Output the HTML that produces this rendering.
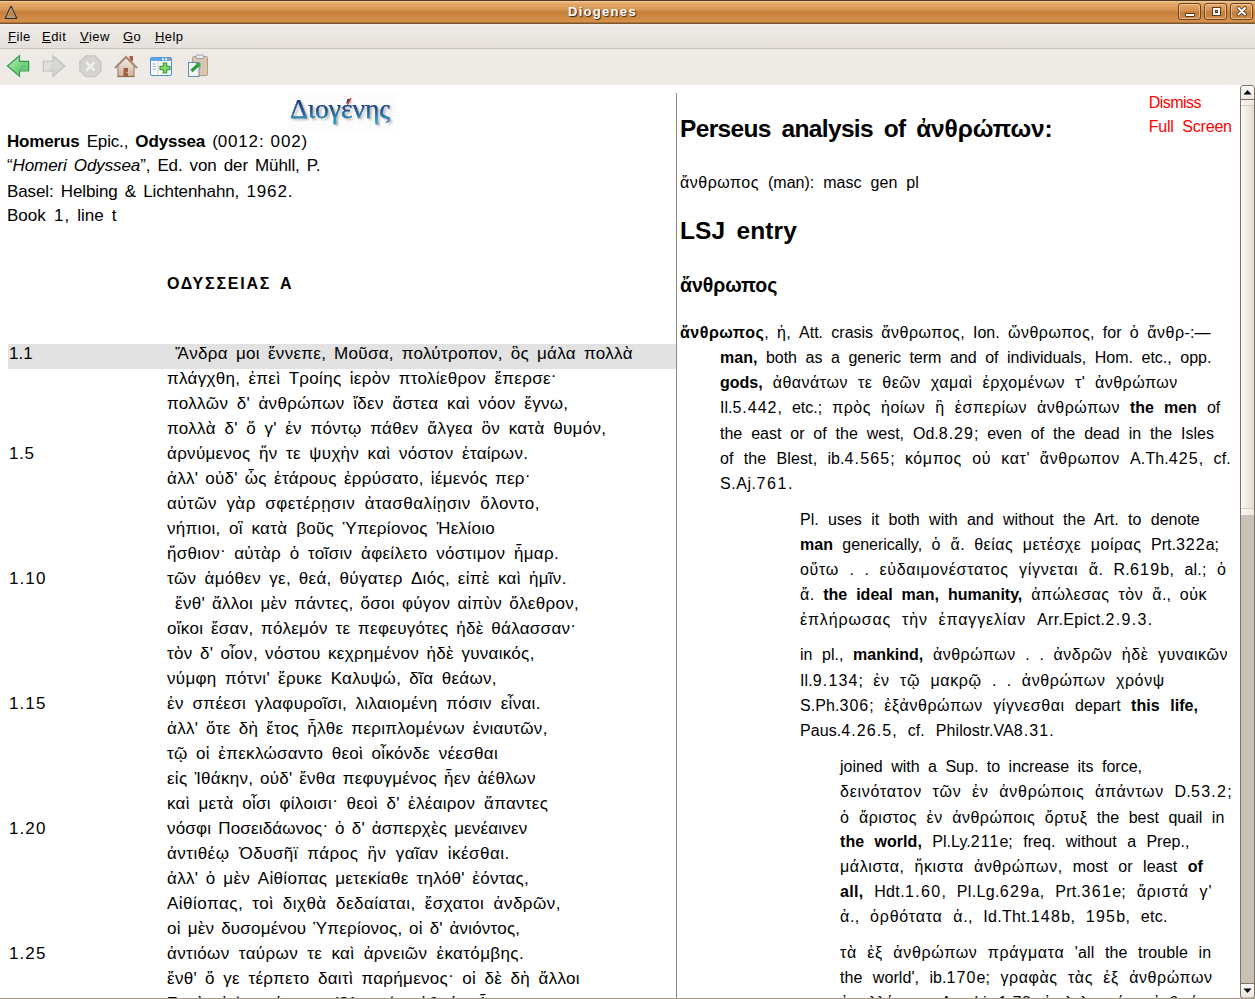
<!DOCTYPE html>
<html><head><meta charset="utf-8">
<style>
html,body{margin:0;padding:0;}
body{width:1255px;height:999px;overflow:hidden;position:relative;background:#fff;font-family:"Liberation Sans",sans-serif;color:#000;}
.abs{position:absolute;}
#title{position:absolute;left:0;top:0;width:1255px;height:24px;
 background:linear-gradient(to bottom,#4e3a24 0px,#4e3a24 1px,#f5c996 1px,#f0bf88 2px,#e4a96b 3px,#d99a58 9px,#c8823c 12px,#c5803a 13px,#cc8842 16px,#d69149 22px,#7a5530 23px,#7a5530 24px);}
#title .t{position:absolute;left:568px;top:4px;font-size:13px;font-weight:bold;color:#fff;letter-spacing:1.3px;text-shadow:1px 1px 1px #3b2612;line-height:16px;}
.wb{position:absolute;top:3px;width:21px;height:15px;border:1px solid #6a4424;border-radius:3px;
 box-shadow:inset 0 0 0 1px rgba(255,220,180,0.55);
 background:linear-gradient(to bottom,#e6a96c 0%,#d49050 45%,#c27d3b 55%,#d08c47 100%);}
#menu{position:absolute;left:0;top:24px;width:1255px;height:24px;background:linear-gradient(to bottom,#f3f1ee 0px,#eeebe7 2px,#e5e0db 24px);border-bottom:1px solid #cdc5bd;}
#menu span{position:absolute;top:5px;font-size:13px;line-height:15px;color:#000;letter-spacing:0.45px;}
#menu u{text-decoration:underline;text-decoration-thickness:1px;text-underline-offset:1px;}
#tool{position:absolute;left:0;top:49px;width:1255px;height:36px;background:#eeeae6;}
#content{position:absolute;left:0;top:85px;width:1255px;height:913px;background:#fff;}
#bottom{position:absolute;left:0;top:998px;width:1255px;height:1px;background:#a89a8a;}
#divider{position:absolute;left:676px;top:93px;width:1px;height:905px;background:#8a8a8a;}
#hl{position:absolute;left:8px;top:344px;width:668px;height:25px;background:#e2e2e2;}
.ln{position:absolute;white-space:nowrap;color:#000;}
.ln b{font-weight:bold;}
.at{position:relative;top:-3.5px;}
.l .g{letter-spacing:calc(var(--ls) + 0.3px)} .r .g{letter-spacing:calc(var(--ls) + 0.5px)} .d{letter-spacing:calc(var(--ls) + 1px)}
#sb{position:absolute;left:1240px;top:85px;width:15px;height:913px;}
#logo,#logosh{position:absolute;left:290px;top:93px;font-family:"Liberation Serif",serif;font-size:27.5px;line-height:32px;letter-spacing:0px;}
#logosh{left:292px;top:95px;color:rgba(80,80,80,0.45);filter:blur(1.2px);}
#logo{background:linear-gradient(to bottom,#15306a 0px,#1a3f7c 10px,#1f5a94 18px,#2590c0 25px,#2ab8dc 32px);-webkit-background-clip:text;background-clip:text;color:transparent;-webkit-text-stroke:0.25px #1d4a84;}
</style></head><body>
<div id="title">
 <svg class="abs" style="left:4px;top:5px" width="14" height="15" viewBox="0 0 14 15">
  <path d="M7 1.5 L12.5 13.3 L1.5 13.3 Z" fill="none" stroke="#2f2f2f" stroke-width="1.6" stroke-linejoin="round"/>
  <path d="M7 3.2 L11.3 12.4 L2.7 12.4 Z" fill="none" stroke="#d8d8d8" stroke-width="0.6"/>
 </svg>
 <div class="t">Diogenes</div>
 <div class="wb" style="left:1178px"><div class="abs" style="left:6px;top:9px;width:8px;height:2px;background:#fff;border:1px solid #5a3a1e;border-radius:1px"></div></div>
 <div class="wb" style="left:1204px"><div class="abs" style="left:8px;top:4px;width:3px;height:3px;border:2px solid #fff;outline:1px solid #5a3a1e;box-shadow:inset 0 0 0 1px #5a3a1e;"></div></div>
 <div class="wb" style="left:1230px">
  <svg class="abs" style="left:4px;top:1px" width="13" height="13" viewBox="0 0 13 13">
   <path d="M3.5 3 L10 9.5 M10 3 L3.5 9.5" stroke="#5a3a1e" stroke-width="3.8" stroke-linecap="round"/>
   <path d="M3.5 3 L10 9.5 M10 3 L3.5 9.5" stroke="#fff" stroke-width="2" stroke-linecap="round"/>
  </svg>
 </div>
</div>
<div id="menu">
 <span style="left:8px"><u>F</u>ile</span>
 <span style="left:42px"><u>E</u>dit</span>
 <span style="left:80px"><u>V</u>iew</span>
 <span style="left:123px"><u>G</u>o</span>
 <span style="left:155px"><u>H</u>elp</span>
</div>
<div id="tool">
 <!-- back -->
 <svg class="abs" style="left:6px;top:5px" width="25" height="25" viewBox="0 0 25 25">
  <defs><linearGradient id="gb" x1="0" y1="0" x2="1" y2="1"><stop offset="0" stop-color="#c8efc4"/><stop offset="0.6" stop-color="#6fd07a"/><stop offset="1" stop-color="#d9f07a"/></linearGradient></defs>
  <path d="M1.5 12 L13.5 1.8 L13.5 7.3 L22.6 7.3 L22.6 17 L13.5 17 L13.5 22.3 Z" fill="url(#gb)" stroke="#2f9a4e" stroke-width="1.2" stroke-linejoin="miter"/><path d="M13 17 Q13 12 18 11 L22 11 L22 16.5 Z" fill="#58c070" opacity="0.6"/>
 </svg>
 <!-- forward -->
 <svg class="abs" style="left:42px;top:5px" width="25" height="25" viewBox="0 0 25 25">
  <path d="M22.8 12 L11 1.8 L11 7.3 L1.4 7.3 L1.4 17 L11 17 L11 22.3 Z" fill="#d6d6d4" stroke="#bdbdbb" stroke-width="1.1"/>
  <path d="M11 7.8 L15 7.8 Q8 9.5 6.5 16.5 L1.9 16.5 L1.9 7.8 Z" fill="#e0e0de"/>
 </svg>
 <!-- stop -->
 <svg class="abs" style="left:78px;top:5px" width="25" height="25" viewBox="0 0 25 25">
  <path d="M8 1.8 L17 1.8 L23 7.8 L23 16.8 L17 22.8 L8 22.8 L1.8 16.8 L1.8 7.8 Z" fill="#d4d3d1" stroke="#c2c1bf" stroke-width="1.1"/>
  <path d="M8.2 8.2 L16.6 16.6 M16.6 8.2 L8.2 16.6" stroke="#f2f1ef" stroke-width="2.4"/>
 </svg>
 <!-- home -->
 <svg class="abs" style="left:113px;top:4px" width="26" height="26" viewBox="0 0 26 26">
  <defs><linearGradient id="gh" x1="0" y1="0" x2="0" y2="1"><stop offset="0" stop-color="#f4ece4"/><stop offset="1" stop-color="#cdb4a2"/></linearGradient></defs>
  <rect x="16.5" y="3" width="3.5" height="5" fill="#b8584a"/>
  <path d="M5 12 L5 23.5 L21 23.5 L21 12 L13 4.5 Z" fill="url(#gh)" stroke="#9a7456" stroke-width="1"/>
  <path d="M2 15 L13 4 L24 15" fill="none" stroke="#a88a76" stroke-width="2.2"/>
  <rect x="10.5" y="15" width="4.5" height="8.5" fill="#a45a48"/>
  <path d="M4.5 23.5 L21.5 23.5" stroke="#8a6a48" stroke-width="1.2"/>
  <circle cx="14" cy="19.5" r="0.7" fill="#f0f040"/>
 </svg>
 <!-- new window -->
 <svg class="abs" style="left:149px;top:5px" width="26" height="25" viewBox="0 0 26 25">
  <rect x="1.5" y="3.5" width="21" height="18" rx="1.5" fill="#fbfbfa" stroke="#4a8ed0" stroke-width="1"/>
  <rect x="1.5" y="3.5" width="21" height="3.5" rx="1" fill="#5aa6e6"/>
  <rect x="13" y="4.3" width="2" height="2" fill="#dbe8f4"/><rect x="16" y="4.3" width="2" height="2" fill="#dbe8f4"/><rect x="19" y="4.3" width="2" height="2" fill="#f08a5a"/>
  <path d="M9 8 L9 20" stroke="#b8bcc0" stroke-width="0.8"/>
  <path d="M3.5 10 L7 10 M3.5 12.5 L7 12.5 M3.5 15 L7 15" stroke="#9aa0a6" stroke-width="0.8"/>
  <path d="M14.3 9 L17.7 9 L17.7 12.3 L21 12.3 L21 15.7 L17.7 15.7 L17.7 19 L14.3 19 L14.3 15.7 L11 15.7 L11 12.3 L14.3 12.3 Z" fill="#8ad86a" stroke="#2a9a3a" stroke-width="1.1"/>
 </svg>
 <!-- clipboard -->
 <svg class="abs" style="left:186px;top:5px" width="25" height="25" viewBox="0 0 25 25">
  <rect x="6.5" y="2.5" width="15" height="19" rx="1.2" fill="#d8c4b0" stroke="#b09c88" stroke-width="1"/>
  <rect x="10" y="1" width="7.5" height="3.5" rx="1" fill="#e8e8f0" stroke="#8890a0" stroke-width="0.8"/>
  <rect x="2.5" y="8.5" width="10.5" height="14" fill="#f4f4f2" stroke="#6a8aaa" stroke-width="1"/>
  <path d="M5.5 17 L12.5 10.5" stroke="#2a9a3a" stroke-width="3.2"/>
  <path d="M9.5 9 L14.5 9 L14.5 14 Z" fill="#3aaa4a"/>
 </svg>
</div>
<div id="content">
</div>
<div id="hl"></div>
<div class="abs" style="left:288px;top:93px;width:109px;height:37px;background:#fcfcfc"></div><div id="logosh">Διογένης</div><div id="logo">Διογένης</div><svg class="abs" style="left:344px;top:97px" width="10" height="10" viewBox="0 0 10 10"><path d="M6.6 1.6 L3.6 7" stroke="#d83a2a" stroke-width="1.6" stroke-linecap="round"/></svg>
<div id="l1" class="ln l" style="left:7.00px;top:132.61px;font-size:17px;line-height:17px;--ls:-0.160px;letter-spacing:-0.160px;word-spacing:2.543px;"><b>Homerus</b> Epic., <b>Odyssea</b> (<span class="d">0012</span>: <span class="d">002</span>)</div>
<div id="l2" class="ln l" style="left:7.00px;top:157.41px;font-size:17px;line-height:17px;--ls:-0.095px;letter-spacing:-0.095px;word-spacing:2.350px;">“<i>Homeri Odyssea</i>”, Ed. von der Mühll, P.</div>
<div id="l3" class="ln l" style="left:7.00px;top:182.81px;font-size:17px;line-height:17px;--ls:-0.107px;letter-spacing:-0.107px;word-spacing:2.524px;">Basel: Helbing &amp; Lichtenhahn, <span class="d">1962.</span></div>
<div id="l4" class="ln l" style="left:7.00px;top:207.11px;font-size:17px;line-height:17px;--ls:0.000px;letter-spacing:0.000px;word-spacing:3.429px;">Book <span class="d">1</span>, line t</div>
<div id="hd" class="ln l" style="left:167.00px;top:276.46px;font-size:16px;line-height:16px;--ls:1.469px;letter-spacing:1.469px;word-spacing:3.000px;"><b><span class="g">ΟΔΥΣΣΕΙΑΣ</span> <span class="g">Α</span></b></div>
<div id="p1" class="ln l" style="left:175.00px;top:345.21px;font-size:17px;line-height:17px;--ls:0.000px;letter-spacing:0.000px;word-spacing:3.398px;"><span class="g">Ἄνδρα</span> <span class="g">μοι</span> <span class="g">ἔννεπε</span>, <span class="g">Μοῦσα</span>, <span class="g">πολύτροπον</span>, <span class="g">ὃς</span> <span class="g">μάλα</span> <span class="g">πολλὰ</span></div>
<div id="p2" class="ln l" style="left:167.00px;top:370.21px;font-size:17px;line-height:17px;--ls:0.000px;letter-spacing:0.000px;word-spacing:3.681px;"><span class="g">πλάγχθη</span>, <span class="g">ἐπεὶ</span> <span class="g">Τροίης</span> <span class="g">ἱερὸν</span> <span class="g">πτολίεθρον</span> <span class="g">ἔπερσε</span><span class="at">·</span></div>
<div id="p3" class="ln l" style="left:167.00px;top:395.21px;font-size:17px;line-height:17px;--ls:0.000px;letter-spacing:0.000px;word-spacing:3.906px;"><span class="g">πολλῶν</span> <span class="g">δ</span>' <span class="g">ἀνθρώπων</span> <span class="g">ἴδεν</span> <span class="g">ἄστεα</span> <span class="g">καὶ</span> <span class="g">νόον</span> <span class="g">ἔγνω</span>,</div>
<div id="p4" class="ln l" style="left:167.00px;top:420.21px;font-size:17px;line-height:17px;--ls:0.000px;letter-spacing:0.000px;word-spacing:3.875px;"><span class="g">πολλὰ</span> <span class="g">δ</span>' <span class="g">ὅ</span> <span class="g">γ</span>' <span class="g">ἐν</span> <span class="g">πόντῳ</span> <span class="g">πάθεν</span> <span class="g">ἄλγεα</span> <span class="g">ὃν</span> <span class="g">κατὰ</span> <span class="g">θυμόν</span>,</div>
<div id="p5" class="ln l" style="left:167.00px;top:445.21px;font-size:17px;line-height:17px;--ls:0.000px;letter-spacing:0.000px;word-spacing:3.723px;"><span class="g">ἀρνύμενος</span> <span class="g">ἥν</span> <span class="g">τε</span> <span class="g">ψυχὴν</span> <span class="g">καὶ</span> <span class="g">νόστον</span> <span class="g">ἑταίρων</span>.</div>
<div id="p6" class="ln l" style="left:167.00px;top:470.21px;font-size:17px;line-height:17px;--ls:0.000px;letter-spacing:0.000px;word-spacing:2.489px;"><span class="g">ἀλλ</span>' <span class="g">οὐδ</span>' <span class="g">ὧς</span> <span class="g">ἑτάρους</span> <span class="g">ἐρρύσατο</span>, <span class="g">ἱέμενός</span> <span class="g">περ</span><span class="at">·</span></div>
<div id="p7" class="ln l" style="left:167.00px;top:495.21px;font-size:17px;line-height:17px;--ls:0.180px;letter-spacing:0.180px;word-spacing:4.463px;"><span class="g">αὐτῶν</span> <span class="g">γὰρ</span> <span class="g">σφετέρῃσιν</span> <span class="g">ἀτασθαλίῃσιν</span> <span class="g">ὄλοντο</span>,</div>
<div id="p8" class="ln l" style="left:167.00px;top:520.21px;font-size:17px;line-height:17px;--ls:0.000px;letter-spacing:0.000px;word-spacing:4.000px;"><span class="g">νήπιοι</span>, <span class="g">οἳ</span> <span class="g">κατὰ</span> <span class="g">βοῦς</span> <span class="g">Ὑπερίονος</span> <span class="g">Ἠελίοιο</span></div>
<div id="p9" class="ln l" style="left:167.00px;top:545.21px;font-size:17px;line-height:17px;--ls:0.000px;letter-spacing:0.000px;word-spacing:3.889px;"><span class="g">ἤσθιον</span><span class="at">·</span> <span class="g">αὐτὰρ</span> <span class="g">ὁ</span> <span class="g">τοῖσιν</span> <span class="g">ἀφείλετο</span> <span class="g">νόστιμον</span> <span class="g">ἦμαρ</span>.</div>
<div id="p10" class="ln l" style="left:167.00px;top:570.21px;font-size:17px;line-height:17px;--ls:0.000px;letter-spacing:0.000px;word-spacing:3.478px;"><span class="g">τῶν</span> <span class="g">ἁμόθεν</span> <span class="g">γε</span>, <span class="g">θεά</span>, <span class="g">θύγατερ</span> <span class="g">Διός</span>, <span class="g">εἰπὲ</span> <span class="g">καὶ</span> <span class="g">ἡμῖν</span>.</div>
<div id="p11" class="ln l" style="left:175.00px;top:595.21px;font-size:17px;line-height:17px;--ls:0.000px;letter-spacing:0.000px;word-spacing:2.460px;"><span class="g">ἔνθ</span>' <span class="g">ἄλλοι</span> <span class="g">μὲν</span> <span class="g">πάντες</span>, <span class="g">ὅσοι</span> <span class="g">φύγον</span> <span class="g">αἰπὺν</span> <span class="g">ὄλεθρον</span>,</div>
<div id="p12" class="ln l" style="left:167.00px;top:620.21px;font-size:17px;line-height:17px;--ls:0.000px;letter-spacing:0.000px;word-spacing:2.957px;"><span class="g">οἴκοι</span> <span class="g">ἔσαν</span>, <span class="g">πόλεμόν</span> <span class="g">τε</span> <span class="g">πεφευγότες</span> <span class="g">ἠδὲ</span> <span class="g">θάλασσαν</span><span class="at">·</span></div>
<div id="p13" class="ln l" style="left:167.00px;top:645.21px;font-size:17px;line-height:17px;--ls:0.000px;letter-spacing:0.000px;word-spacing:2.740px;"><span class="g">τὸν</span> <span class="g">δ</span>' <span class="g">οἶον</span>, <span class="g">νόστου</span> <span class="g">κεχρημένον</span> <span class="g">ἠδὲ</span> <span class="g">γυναικός</span>,</div>
<div id="p14" class="ln l" style="left:167.00px;top:670.21px;font-size:17px;line-height:17px;--ls:0.000px;letter-spacing:0.000px;word-spacing:3.687px;"><span class="g">νύμφη</span> <span class="g">πότνι</span>' <span class="g">ἔρυκε</span> <span class="g">Καλυψώ</span>, <span class="g">δῖα</span> <span class="g">θεάων</span>,</div>
<div id="p15" class="ln l" style="left:167.00px;top:695.21px;font-size:17px;line-height:17px;--ls:0.000px;letter-spacing:0.000px;word-spacing:4.141px;"><span class="g">ἐν</span> <span class="g">σπέεσι</span> <span class="g">γλαφυροῖσι</span>, <span class="g">λιλαιομένη</span> <span class="g">πόσιν</span> <span class="g">εἶναι</span>.</div>
<div id="p16" class="ln l" style="left:167.00px;top:720.21px;font-size:17px;line-height:17px;--ls:0.000px;letter-spacing:0.000px;word-spacing:3.278px;"><span class="g">ἀλλ</span>' <span class="g">ὅτε</span> <span class="g">δὴ</span> <span class="g">ἔτος</span> <span class="g">ἦλθε</span> <span class="g">περιπλομένων</span> <span class="g">ἐνιαυτῶν</span>,</div>
<div id="p17" class="ln l" style="left:167.00px;top:745.21px;font-size:17px;line-height:17px;--ls:0.000px;letter-spacing:0.000px;word-spacing:3.703px;"><span class="g">τῷ</span> <span class="g">οἱ</span> <span class="g">ἐπεκλώσαντο</span> <span class="g">θεοὶ</span> <span class="g">οἶκόνδε</span> <span class="g">νέεσθαι</span></div>
<div id="p18" class="ln l" style="left:167.00px;top:770.21px;font-size:17px;line-height:17px;--ls:-0.028px;letter-spacing:-0.028px;word-spacing:2.335px;"><span class="g">εἰς</span> <span class="g">Ἰθάκην</span>, <span class="g">οὐδ</span>' <span class="g">ἔνθα</span> <span class="g">πεφυγμένος</span> <span class="g">ἦεν</span> <span class="g">ἀέθλων</span></div>
<div id="p19" class="ln l" style="left:167.00px;top:795.21px;font-size:17px;line-height:17px;--ls:0.000px;letter-spacing:0.000px;word-spacing:3.874px;"><span class="g">καὶ</span> <span class="g">μετὰ</span> <span class="g">οἷσι</span> <span class="g">φίλοισι</span><span class="at">·</span> <span class="g">θεοὶ</span> <span class="g">δ</span>' <span class="g">ἐλέαιρον</span> <span class="g">ἅπαντες</span></div>
<div id="p20" class="ln l" style="left:167.00px;top:820.21px;font-size:17px;line-height:17px;--ls:-0.124px;letter-spacing:-0.124px;word-spacing:2.477px;"><span class="g">νόσφι</span> <span class="g">Ποσειδάωνος</span><span class="at">·</span> <span class="g">ὁ</span> <span class="g">δ</span>' <span class="g">ἀσπερχὲς</span> <span class="g">μενέαινεν</span></div>
<div id="p21" class="ln l" style="left:167.00px;top:845.21px;font-size:17px;line-height:17px;--ls:0.169px;letter-spacing:0.169px;word-spacing:4.367px;"><span class="g">ἀντιθέῳ</span> <span class="g">Ὀδυσῆϊ</span> <span class="g">πάρος</span> <span class="g">ἣν</span> <span class="g">γαῖαν</span> <span class="g">ἱκέσθαι</span>.</div>
<div id="p22" class="ln l" style="left:167.00px;top:870.21px;font-size:17px;line-height:17px;--ls:0.000px;letter-spacing:0.000px;word-spacing:3.044px;"><span class="g">ἀλλ</span>' <span class="g">ὁ</span> <span class="g">μὲν</span> <span class="g">Αἰθίοπας</span> <span class="g">μετεκίαθε</span> <span class="g">τηλόθ</span>' <span class="g">ἐόντας</span>,</div>
<div id="p23" class="ln l" style="left:167.00px;top:895.21px;font-size:17px;line-height:17px;--ls:0.197px;letter-spacing:0.197px;word-spacing:4.367px;"><span class="g">Αἰθίοπας</span>, <span class="g">τοὶ</span> <span class="g">διχθὰ</span> <span class="g">δεδαίαται</span>, <span class="g">ἔσχατοι</span> <span class="g">ἀνδρῶν</span>,</div>
<div id="p24" class="ln l" style="left:167.00px;top:920.21px;font-size:17px;line-height:17px;--ls:-0.092px;letter-spacing:-0.092px;word-spacing:2.349px;"><span class="g">οἱ</span> <span class="g">μὲν</span> <span class="g">δυσομένου</span> <span class="g">Ὑπερίονος</span>, <span class="g">οἱ</span> <span class="g">δ</span>' <span class="g">ἀνιόντος</span>,</div>
<div id="p25" class="ln l" style="left:167.00px;top:945.21px;font-size:17px;line-height:17px;--ls:0.065px;letter-spacing:0.065px;word-spacing:4.390px;"><span class="g">ἀντιόων</span> <span class="g">ταύρων</span> <span class="g">τε</span> <span class="g">καὶ</span> <span class="g">ἀρνειῶν</span> <span class="g">ἑκατόμβης</span>.</div>
<div id="p26" class="ln l" style="left:167.00px;top:970.21px;font-size:17px;line-height:17px;--ls:0.000px;letter-spacing:0.000px;word-spacing:3.700px;"><span class="g">ἔνθ</span>' <span class="g">ὅ</span> <span class="g">γε</span> <span class="g">τέρπετο</span> <span class="g">δαιτὶ</span> <span class="g">παρήμενος</span><span class="at">·</span> <span class="g">οἱ</span> <span class="g">δὲ</span> <span class="g">δὴ</span> <span class="g">ἄλλοι</span></div>
<div id="p27" class="ln l" style="left:167.00px;top:995.21px;font-size:17px;line-height:17px;--ls:-0.241px;letter-spacing:-0.241px;word-spacing:2.459px;"><span class="g">Ζηνὸς</span> <span class="g">ἐνὶ</span> <span class="g">μεγάροισιν</span> <span class="g">Ὀλυμπίου</span> <span class="g">ἁθρόοι</span> <span class="g">ἦσαν</span>.</div>
<div id="n1" class="ln l" style="left:9.00px;top:345.21px;font-size:17px;line-height:17px;--ls:-0.922px;letter-spacing:-0.922px;word-spacing:3.000px;"><span class="d">1.1</span></div>
<div id="n5" class="ln l" style="left:9.00px;top:445.21px;font-size:17px;line-height:17px;--ls:-0.386px;letter-spacing:-0.386px;word-spacing:3.000px;"><span class="d">1.5</span></div>
<div id="n10" class="ln l" style="left:9.00px;top:570.21px;font-size:17px;line-height:17px;--ls:0.095px;letter-spacing:0.095px;word-spacing:3.000px;"><span class="d">1.10</span></div>
<div id="n15" class="ln l" style="left:9.00px;top:695.21px;font-size:17px;line-height:17px;--ls:0.095px;letter-spacing:0.095px;word-spacing:3.000px;"><span class="d">1.15</span></div>
<div id="n20" class="ln l" style="left:9.00px;top:820.21px;font-size:17px;line-height:17px;--ls:0.095px;letter-spacing:0.095px;word-spacing:3.000px;"><span class="d">1.20</span></div>
<div id="n25" class="ln l" style="left:9.00px;top:945.21px;font-size:17px;line-height:17px;--ls:0.095px;letter-spacing:0.095px;word-spacing:3.000px;"><span class="d">1.25</span></div>
<div id="divider"></div>
<div id="dm" class="ln r" style="left:1148.70px;top:95.16px;font-size:16px;line-height:16px;--ls:-0.527px;letter-spacing:-0.527px;word-spacing:4.500px;color:#f00">Dismiss</div>
<div id="fs" class="ln r" style="left:1148.70px;top:118.86px;font-size:16px;line-height:16px;--ls:-0.211px;letter-spacing:-0.211px;word-spacing:4.500px;color:#f00">Full Screen</div>
<div id="h1" class="ln r" style="left:680.00px;top:117.26px;font-size:24.5px;line-height:24.5px;--ls:-0.647px;letter-spacing:-0.647px;word-spacing:4.500px;"><b>Perseus analysis of <span class="g">ἀνθρώπων</span>:</b></div>
<div id="an" class="ln r" style="left:680.00px;top:174.76px;font-size:16px;line-height:16px;--ls:0.000px;letter-spacing:0.000px;word-spacing:4.620px;"><span class="g">ἄνθρωπος</span> (man): masc gen pl</div>
<div id="h2" class="ln r" style="left:680.00px;top:218.86px;font-size:24.5px;line-height:24.5px;--ls:0.082px;letter-spacing:0.082px;word-spacing:4.500px;"><b>LSJ entry</b></div>
<div id="h3" class="ln r" style="left:680.00px;top:276.49px;font-size:19.5px;line-height:19.5px;--ls:-0.564px;letter-spacing:-0.564px;word-spacing:4.500px;"><b><span class="g">ἄνθρωπος</span></b></div>
<div id="r0_0" class="ln r" style="left:680.00px;top:325.06px;font-size:16px;line-height:16px;--ls:0.000px;letter-spacing:0.000px;word-spacing:3.800px;"><b><span class="g">ἄνθρωπος</span></b>, <span class="g">ἡ</span>, Att. crasis <span class="g">ἅνθρωπος</span>, Ion. <span class="g">ὥνθρωπος</span>, for <span class="g">ὁ</span> <span class="g">ἄνθρ</span>-:—</div>
<div id="r0_1" class="ln r" style="left:720.00px;top:350.26px;font-size:16px;line-height:16px;--ls:0.000px;letter-spacing:0.000px;word-spacing:4.086px;"><b>man,</b> both as a generic term and of individuals, Hom. etc., opp.</div>
<div id="r0_2" class="ln r" style="left:720.00px;top:375.26px;font-size:16px;line-height:16px;--ls:0.000px;letter-spacing:0.000px;word-spacing:5.537px;"><b>gods,</b> <span class="g">ἀθανάτων</span> <span class="g">τε</span> <span class="g">θεῶν</span> <span class="g">χαμαὶ</span> <span class="g">ἐρχομένων</span> <span class="g">τ</span>' <span class="g">ἀνθρώπων</span></div>
<div id="r0_3" class="ln r" style="left:720.00px;top:400.46px;font-size:16px;line-height:16px;--ls:0.000px;letter-spacing:0.000px;word-spacing:5.570px;">Il.<span class="d">5.442</span>, etc.; <span class="g">πρὸς</span> <span class="g">ἠοίων</span> <span class="g">ἢ</span> <span class="g">ἑσπερίων</span> <span class="g">ἀνθρώπων</span> <b>the men</b> of</div>
<div id="r0_4" class="ln r" style="left:720.00px;top:426.46px;font-size:16px;line-height:16px;--ls:0.000px;letter-spacing:0.000px;word-spacing:4.439px;">the east or of the west, Od.<span class="d">8.29</span>; even of the dead in the Isles</div>
<div id="r0_5" class="ln r" style="left:720.00px;top:451.46px;font-size:16px;line-height:16px;--ls:0.097px;letter-spacing:0.097px;word-spacing:5.708px;">of the Blest, ib.<span class="d">4.565</span>; <span class="g">κόμπος</span> <span class="g">οὐ</span> <span class="g">κατ</span>' <span class="g">ἄνθρωπον</span> A.Th.<span class="d">425</span>, cf.</div>
<div id="r0_6" class="ln r" style="left:720.00px;top:476.46px;font-size:16px;line-height:16px;--ls:0.561px;letter-spacing:0.561px;word-spacing:4.500px;">S.Aj.<span class="d">761.</span></div>
<div id="r1_0" class="ln r" style="left:800.00px;top:512.46px;font-size:16px;line-height:16px;--ls:0.000px;letter-spacing:0.000px;word-spacing:4.931px;">Pl. uses it both with and without the Art. to denote</div>
<div id="r1_1" class="ln r" style="left:800.00px;top:537.46px;font-size:16px;line-height:16px;--ls:0.000px;letter-spacing:0.000px;word-spacing:5.022px;"><b>man</b> generically, <span class="g">ὁ</span> <span class="g">ἄ</span>. <span class="g">θείας</span> <span class="g">μετέσχε</span> <span class="g">μοίρας</span> Prt.<span class="d">322</span>a;</div>
<div id="r1_2" class="ln r" style="left:800.00px;top:562.46px;font-size:16px;line-height:16px;--ls:0.199px;letter-spacing:0.199px;word-spacing:5.719px;"><span class="g">οὕτω</span> . . <span class="g">εὐδαιμονέστατος</span> <span class="g">γίγνεται</span> <span class="g">ἄ</span>. R.<span class="d">619</span>b, al.; <span class="g">ὁ</span></div>
<div id="r1_3" class="ln r" style="left:800.00px;top:587.46px;font-size:16px;line-height:16px;--ls:0.000px;letter-spacing:0.000px;word-spacing:4.537px;"><span class="g">ἄ</span>. <b>the ideal man, humanity,</b> <span class="g">ἀπώλεσας</span> <span class="g">τὸν</span> <span class="g">ἄ</span>., <span class="g">οὐκ</span></div>
<div id="r1_4" class="ln r" style="left:800.00px;top:612.46px;font-size:16px;line-height:16px;--ls:0.346px;letter-spacing:0.346px;word-spacing:6.046px;"><span class="g">ἐπλήρωσας</span> <span class="g">τὴν</span> <span class="g">ἐπαγγελίαν</span> Arr.Epict.<span class="d">2.9.3.</span></div>
<div id="r2_0" class="ln r" style="left:800.00px;top:647.46px;font-size:16px;line-height:16px;--ls:0.000px;letter-spacing:0.000px;word-spacing:5.172px;">in pl., <b>mankind,</b> <span class="g">ἀνθρώπων</span> . . <span class="g">ἀνδρῶν</span> <span class="g">ἠδὲ</span> <span class="g">γυναικῶν</span></div>
<div id="r2_1" class="ln r" style="left:800.00px;top:672.96px;font-size:16px;line-height:16px;--ls:0.118px;letter-spacing:0.118px;word-spacing:5.768px;">Il.<span class="d">9.134</span>; <span class="g">ἐν</span> <span class="g">τῷ</span> <span class="g">μακρῷ</span> . . <span class="g">ἀνθρώπων</span> <span class="g">χρόνψ</span></div>
<div id="r2_2" class="ln r" style="left:800.00px;top:698.21px;font-size:16px;line-height:16px;--ls:0.058px;letter-spacing:0.058px;word-spacing:5.881px;">S.Ph.<span class="d">306</span>; <span class="g">ἐξἀνθρώπων</span> <span class="g">γίγνεσθαι</span> depart <b>this life,</b></div>
<div id="r2_3" class="ln r" style="left:800.00px;top:723.46px;font-size:16px;line-height:16px;--ls:0.077px;letter-spacing:0.077px;word-spacing:6.445px;">Paus.<span class="d">4.26.5</span>, cf. Philostr.VA<span class="d">8.31.</span></div>
<div id="r3_0" class="ln r" style="left:840.00px;top:759.46px;font-size:16px;line-height:16px;--ls:0.000px;letter-spacing:0.000px;word-spacing:4.011px;">joined with a Sup. to increase its force,</div>
<div id="r3_1" class="ln r" style="left:840.00px;top:784.36px;font-size:16px;line-height:16px;--ls:0.237px;letter-spacing:0.237px;word-spacing:5.851px;"><span class="g">δεινότατον</span> <span class="g">τῶν</span> <span class="g">ἐν</span> <span class="g">ἀνθρώποις</span> <span class="g">ἁπάντων</span> D.<span class="d">53.2</span>;</div>
<div id="r3_2" class="ln r" style="left:840.00px;top:809.76px;font-size:16px;line-height:16px;--ls:0.000px;letter-spacing:0.000px;word-spacing:5.116px;"><span class="g">ὁ</span> <span class="g">ἄριστος</span> <span class="g">ἐν</span> <span class="g">ἀνθρώποις</span> <span class="g">ὄρτυξ</span> the best quail in</div>
<div id="r3_3" class="ln r" style="left:840.00px;top:834.26px;font-size:16px;line-height:16px;--ls:0.050px;letter-spacing:0.050px;word-spacing:5.824px;"><b>the world,</b> Pl.Ly.<span class="d">211</span>e; freq. without a Prep.,</div>
<div id="r3_4" class="ln r" style="left:840.00px;top:859.46px;font-size:16px;line-height:16px;--ls:0.107px;letter-spacing:0.107px;word-spacing:5.807px;"><span class="g">μάλιστα</span>, <span class="g">ἥκιστα</span> <span class="g">ἀνθρώπων</span>, most or least <b>of</b></div>
<div id="r3_5" class="ln r" style="left:840.00px;top:884.46px;font-size:16px;line-height:16px;--ls:0.340px;letter-spacing:0.340px;word-spacing:5.823px;"><b>all,</b> Hdt.<span class="d">1.60</span>, Pl.Lg.<span class="d">629</span>a, Prt.<span class="d">361</span>e; <span class="g">ἄριστά</span> <span class="g">γ</span>'</div>
<div id="r3_6" class="ln r" style="left:840.00px;top:909.46px;font-size:16px;line-height:16px;--ls:0.286px;letter-spacing:0.286px;word-spacing:5.843px;"><span class="g">ἀ</span>., <span class="g">ὀρθότατα</span> <span class="g">ἀ</span>., Id.Tht.<span class="d">148</span>b, <span class="d">195</span>b, etc.</div>
<div id="r4_0" class="ln r" style="left:840.00px;top:945.46px;font-size:16px;line-height:16px;--ls:0.168px;letter-spacing:0.168px;word-spacing:5.760px;"><span class="g">τὰ</span> <span class="g">ἐξ</span> <span class="g">ἀνθρώπων</span> <span class="g">πράγματα</span> 'all the trouble in</div>
<div id="r4_1" class="ln r" style="left:840.00px;top:970.46px;font-size:16px;line-height:16px;--ls:0.081px;letter-spacing:0.081px;word-spacing:5.811px;">the world', ib.<span class="d">170</span>e; <span class="g">γραφὰς</span> <span class="g">τὰς</span> <span class="g">ἐξ</span> <span class="g">ἀνθρώπων</span></div>
<div id="r4_2" class="ln r" style="left:840.00px;top:995.46px;font-size:16px;line-height:16px;--ls:-0.507px;letter-spacing:-0.507px;word-spacing:4.328px;"><span class="g">ἀπαλλάσσειν</span> Aeschin.<span class="d">1.78</span>; <span class="g">ἐπιλελησμένοι</span> <span class="g">ἀνθρώπων</span></div>
<div id="sb">
 <div class="abs" style="left:0;top:0;width:13px;height:912px;border:1px solid #7f7263;border-radius:3px;background:#c9c0b6;"></div>
 <div class="abs" style="left:1px;top:1px;width:13px;height:13px;border-bottom:1px solid #7f7263;border-radius:2px 2px 0 0;background:linear-gradient(to bottom,#fbfaf8,#ebe7e3);"></div>
 <svg class="abs" style="left:3px;top:4px" width="9" height="6" viewBox="0 0 9 6"><path d="M0.5 5.5 L4.5 1 L8.5 5.5 Z" fill="#000"/></svg>
 <div class="abs" style="left:1px;top:15px;width:13px;height:414px;border-bottom:1px solid #7f7263;background:linear-gradient(to right,#fbfaf8,#e2dbd5);"></div>
 <div class="abs" style="left:1px;top:15px;width:13px;height:5px;border-bottom:1px solid #d4cdc6;background:linear-gradient(to right,#faf8f6,#ece7e2);"></div>
 <div class="abs" style="left:1px;top:423px;width:13px;height:6px;border-top:1px solid #d4cdc6;background:linear-gradient(to right,#faf8f6,#ece7e2);"></div>
 <div class="abs" style="left:4px;top:205px;width:7px;height:26px;background-image:radial-gradient(circle,#d6d0ca 0.5px,transparent 0.7px);background-size:2px 2px;opacity:0.8;"></div>
 <div class="abs" style="left:1px;top:898px;width:13px;height:13px;border-top:1px solid #7f7263;border-radius:0 0 2px 2px;background:linear-gradient(to bottom,#fbfaf8,#ebe7e3);"></div>
 <svg class="abs" style="left:3px;top:903px" width="9" height="6" viewBox="0 0 9 6"><path d="M0.5 0.5 L4.5 5 L8.5 0.5 Z" fill="#000"/></svg>
</div>
<div id="bottom"></div>
</body></html>
